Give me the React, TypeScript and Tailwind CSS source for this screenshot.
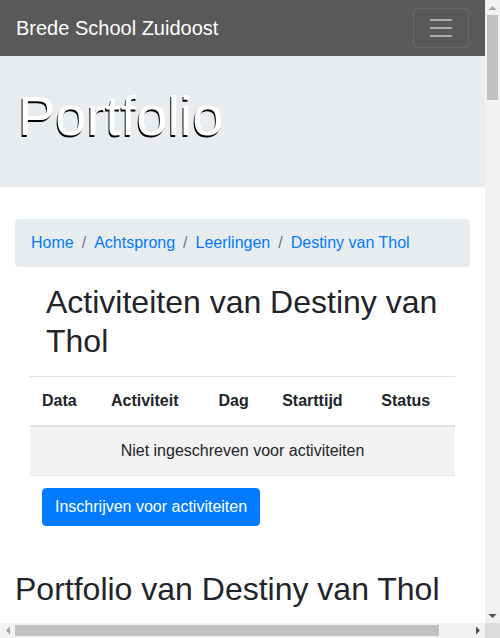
const rows = ['Data', 'Activiteit', 'Dag', 'Starttijd', 'Status'];

const crumbs = ['Home', 'Achtsprong', 'Leerlingen', 'Destiny van Thol'];

const Arrow = ({ dir, color }: { dir: 'up' | 'down' | 'left' | 'right'; color: string }) => {
  const pts = {
    up: '3.5,5 7.5,1 11.5,5',
    down: '3.5,1 7.5,5 11.5,1',
    left: '5,3.5 1,7.5 5,11.5',
    right: '1,3.5 5,7.5 1,11.5',
  }[dir];
  const vertical = dir === 'up' || dir === 'down';
  return (
    <div className="w-[15px] h-[15px] flex items-center justify-center shrink-0">
      <svg width={vertical ? 15 : 6} height={vertical ? 6 : 15} viewBox={vertical ? '0 0 15 6' : '0 0 6 15'}>
        <polygon points={pts} fill={color} />
      </svg>
    </div>
  );
};

const App = () => {
  return (
    <div className="w-[500px] h-[638px] grid grid-cols-[485px_15px] grid-rows-[623px_15px] font-['Liberation_Sans',Arial,sans-serif] text-[#212529] bg-white">
      <div className="overflow-hidden">
        <nav className="bg-[#595959] h-[56px] px-4 flex items-center justify-between">
          <a className="text-white text-[20px] leading-[30px]">Brede School Zuidoost</a>
          <button className="w-[56px] h-[40px] border border-white/10 rounded flex items-center justify-center">
            <svg width="30" height="30" viewBox="0 0 30 30">
              <path d="M4 7h22M4 15h22M4 23h22" stroke="rgba(255,255,255,0.5)" strokeWidth="2" />
            </svg>
          </button>
        </nav>

        <div className="bg-[#e9ecef] pl-[18px] pr-4 pt-[26px] pb-[38px] mb-8">
          <h1 className="text-[56px] leading-[1.2] font-light text-white [text-shadow:-1px_2px_0_#000]">Portfolio</h1>
        </div>

        <div className="px-[15px]">
          <ol className="bg-[#e9ecef] rounded px-4 py-3 flex leading-6 mb-4">
            {crumbs.map((c, i) => (
              <li key={c} className="flex">
                {i > 0 && <span className="text-[#6c757d] px-2">/</span>}
                <a className="text-[#007bff]">{c}</a>
              </li>
            ))}
          </ol>

          <div className="px-[15px]">
            <h2 className="text-[32px] leading-[1.2] px-4 mb-4">Activiteiten van Destiny van Thol</h2>
            <table className="w-full border-collapse">
              <thead>
                <tr className="border-t border-[#dee2e6]">
                  {rows.map((r) => (
                    <th key={r} className="p-3 text-left font-bold leading-6 border-b-2 border-[#dee2e6]">
                      {r}
                    </th>
                  ))}
                </tr>
              </thead>
              <tbody>
                <tr className="bg-[#f2f2f2] border-b border-[#dee2e6]">
                  <td colSpan={5} className="p-3 text-center leading-6">
                    Niet ingeschreven voor activiteiten
                  </td>
                </tr>
              </tbody>
            </table>
            <button className="mt-3 ml-3 bg-[#007bff] border border-[#007bff] text-white rounded px-3 py-1.5 leading-6">
              Inschrijven voor activiteiten
            </button>
          </div>

          <h2 className="text-[32px] leading-[1.2] mt-11 mb-4">Portfolio van Destiny van Thol</h2>
        </div>
      </div>

      {/* vertical scrollbar */}
      <div className="bg-[#f1f1f1] flex flex-col">
        <Arrow dir="up" color="#a3a3a3" />
        <div className="flex-1">
          <div className="w-[11px] h-[85px] mx-auto bg-[#c1c1c1]" />
        </div>
        <Arrow dir="down" color="#505050" />
      </div>

      {/* horizontal scrollbar */}
      <div className="bg-[#f1f1f1] flex">
        <Arrow dir="left" color="#a3a3a3" />
        <div className="flex-1 flex items-center">
          <div className="w-[424px] h-[11px] bg-[#c1c1c1]" />
        </div>
        <Arrow dir="right" color="#505050" />
      </div>
      <div className="bg-[#dcdcdc]" />
    </div>
  );
};

export default App;
